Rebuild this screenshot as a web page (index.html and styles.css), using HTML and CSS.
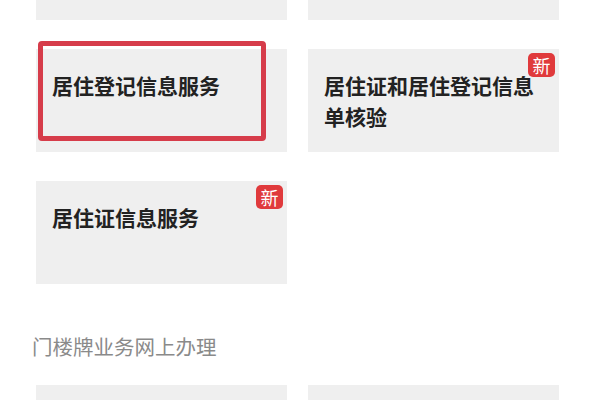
FILE: index.html
```html
<!DOCTYPE html>
<html lang="zh">
<head>
<meta charset="utf-8">
<link rel="stylesheet" href="styles.css">
</head>
<body>
<div class="page">
  <div class="grid grid-top">
    <div class="card"></div>
    <div class="card"></div>
    <div class="card selected">
      <div class="title">居住登记信息服务</div>
      <div class="highlight"></div>
    </div>
    <div class="card">
      <div class="title">居住证和居住登记信息单核验</div>
      <span class="badge">新</span>
    </div>
    <div class="card">
      <div class="title">居住证信息服务</div>
      <span class="badge">新</span>
    </div>
  </div>
  <div class="section-title">门楼牌业务网上办理</div>
  <div class="grid grid-bottom">
    <div class="card card-cut"></div>
    <div class="card card-cut"></div>
  </div>
</div>
</body>
</html>
```
FILE: styles.css
```css
html, body {
  margin: 0;
  padding: 0;
  background: #ffffff;
  overflow: hidden;
}
body {
  font-family: "Noto Sans CJK SC", "Noto Sans", sans-serif;
  width: 600px;
  height: 400px;
}
.page {
  padding: 0 42px 0 36px;
  height: 400px;
  overflow: hidden;
}
.grid {
  display: grid;
  grid-template-columns: 251px 251px;
  column-gap: 21px;
  row-gap: 29px;
}
.grid-top {
  margin-top: -83px;
}
.card {
  position: relative;
  height: 103px;
  background: #efefef;
  box-sizing: border-box;
  padding: 21px 16px 0 16px;
}
.card-cut {
  height: 15px;
}
.title {
  font-size: 21px;
  line-height: 31px;
  font-weight: 700;
  color: #222222;
}
.badge {
  position: absolute;
  top: 4px;
  right: 4px;
  width: 27px;
  height: 24px;
  border-radius: 5px;
  background: #e03a3c;
  color: #ffffff;
  font-size: 18px;
  line-height: 24px;
  text-align: center;
}
.highlight {
  position: absolute;
  left: 2px;
  top: -8px;
  width: 228px;
  height: 100px;
  box-sizing: border-box;
  border: 5px solid #d63c4a;
  border-radius: 4px;
}
.section-title {
  margin: 48px 0 25px -4px;
  font-size: 20.5px;
  line-height: 28px;
  color: #8a8a8a;
  font-weight: 400;
}
```
